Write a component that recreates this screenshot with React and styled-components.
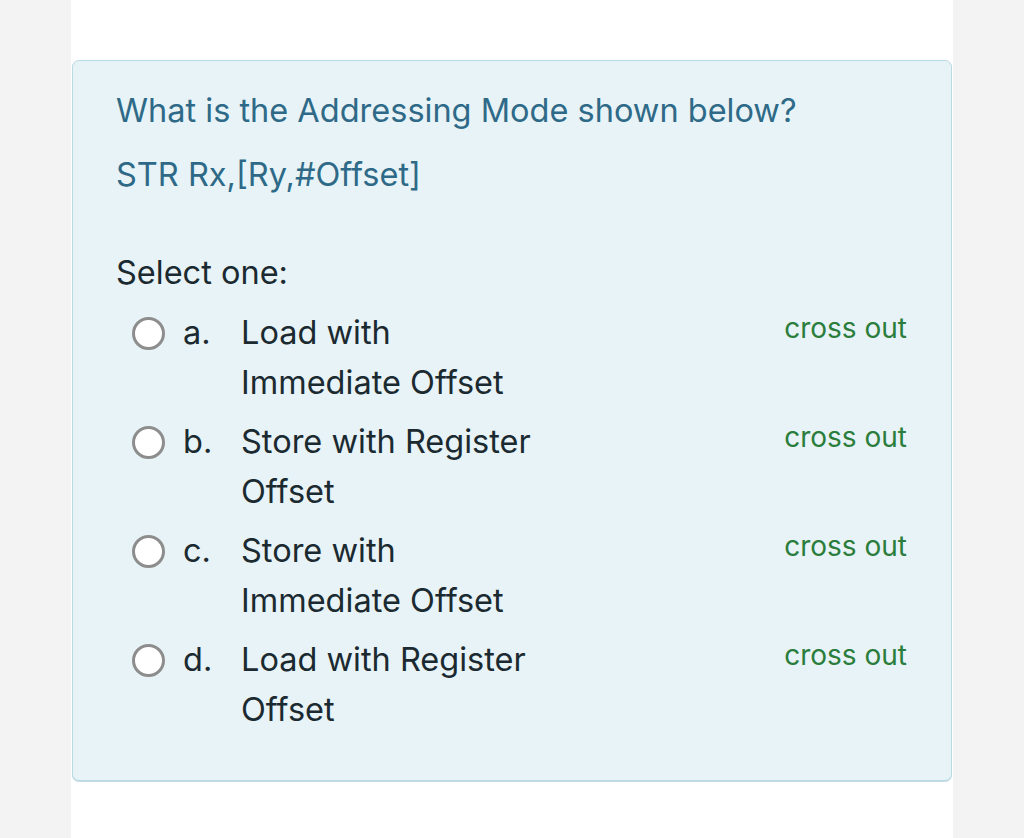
import React from "react";
import styled, { createGlobalStyle } from "styled-components";

const Global = createGlobalStyle`
  html, body { margin: 0; padding: 0; background: #f3f3f3; }
  body { font-family: Inter, "Noto Sans", "Liberation Sans", sans-serif; }
`;

const Column = styled.div`
  margin-left: 71px;
  width: 882px;
  min-height: 838px;
  background: #ffffff;
  padding: 60px 1px 0;
  box-sizing: border-box;
`;

const Card = styled.div`
  background: #e7f3f6;
  border: 1.5px solid #b9d9e3;
  border-radius: 7px;
  box-shadow: 0 1px 0 #c4dbe1;
  height: 721px;
  box-sizing: border-box;
  padding: 18px 44px 0 43px;
`;

const Question = styled.div`
  color: #2e6a88;
  font-size: 32.5px;
  line-height: 64px;
`;

const SelectOne = styled.div`
  color: #1b2a30;
  font-size: 32.5px;
  line-height: 50px;
  margin-top: 41px;
`;

const Options = styled.div`
  display: flex;
  flex-direction: column;
  gap: 9px;
  margin-top: 10px;
`;

const OptionRow = styled.div`
  display: grid;
  grid-template-columns: 50px 75px 1fr auto;
  align-items: start;
  color: #1b2a30;
  font-size: 32.5px;
  line-height: 50px;
`;

const Radio = styled.span`
  margin-left: 16px;
  margin-top: 9px;
  width: 33px;
  height: 33px;
  border-radius: 50%;
  border: 3px solid #8d8d8d;
  background: #ffffff;
  box-sizing: border-box;
`;

const Letter = styled.span`
  padding-left: 17px;
`;

const Label = styled.span`
  max-width: 305px;
`;

const CrossOut = styled.span`
  color: #2b7d3c;
  font-size: 28px;
  line-height: 40px;
`;

const options = [
  { letter: "a.", text: "Load with Immediate Offset" },
  { letter: "b.", text: "Store with Register Offset" },
  { letter: "c.", text: "Store with Immediate Offset" },
  { letter: "d.", text: "Load with Register Offset" },
];

export default function App() {
  return (
    <>
      <Global />
      <Column>
        <Card>
          <Question>
            <div>What is the Addressing Mode shown below?</div>
            <div>STR Rx,[Ry,#Offset]</div>
          </Question>
          <SelectOne>Select one:</SelectOne>
          <Options>
            {options.map((o) => (
              <OptionRow key={o.letter}>
                <Radio />
                <Letter>{o.letter}</Letter>
                <Label>{o.text}</Label>
                <CrossOut>cross out</CrossOut>
              </OptionRow>
            ))}
          </Options>
        </Card>
      </Column>
    </>
  );
}
